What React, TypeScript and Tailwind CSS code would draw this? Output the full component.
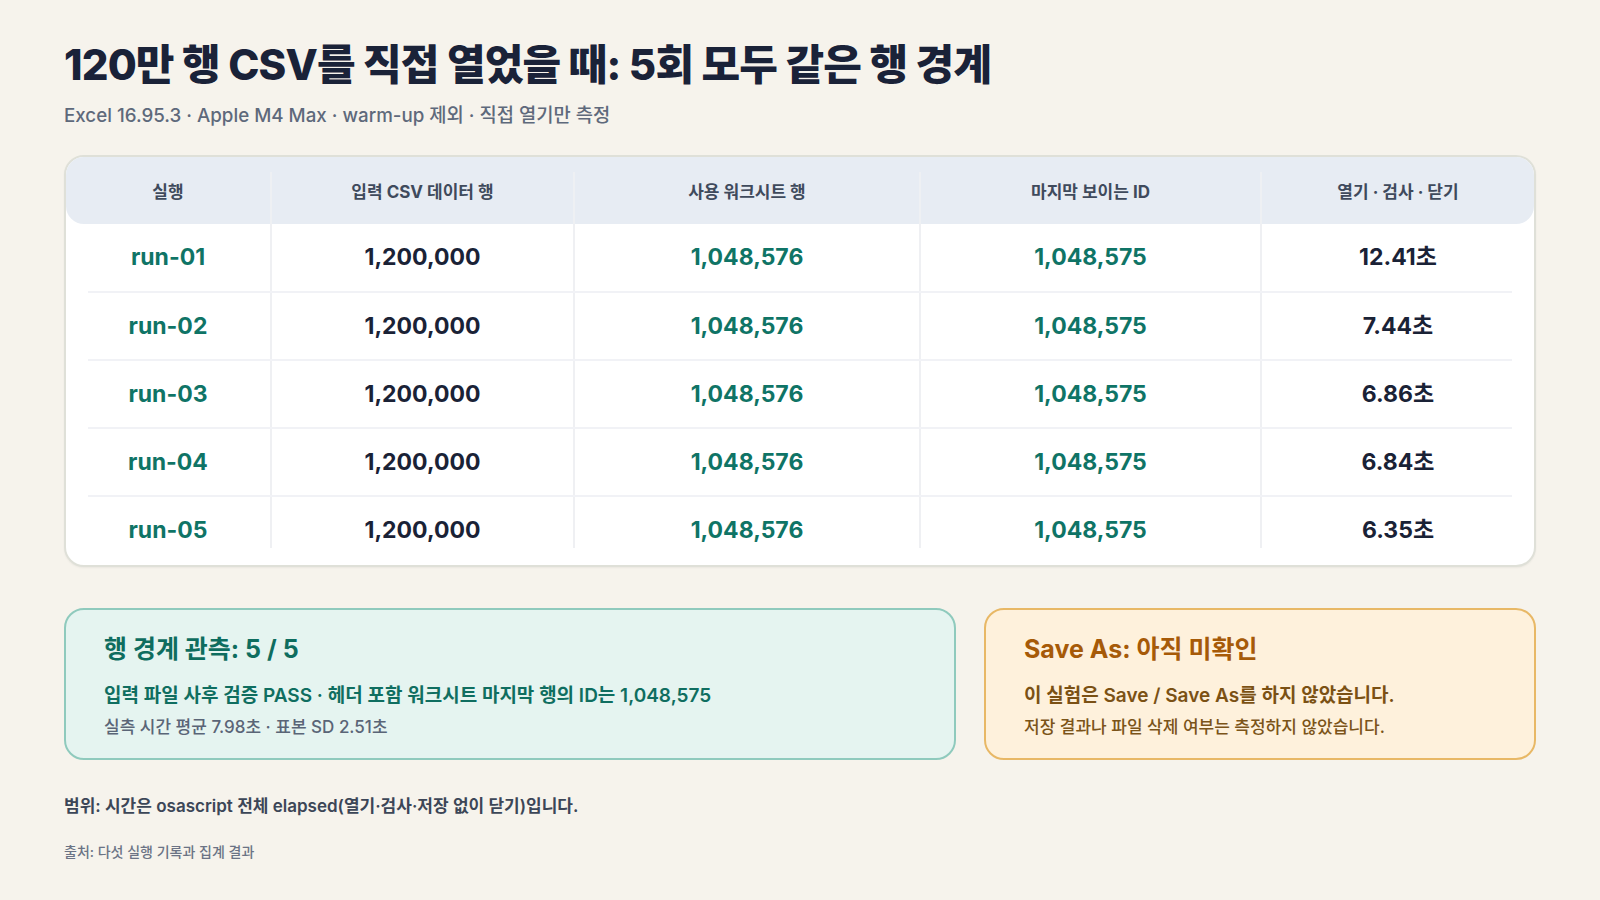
import * as React from 'react';

type Run = {
  id: string;
  input: string;
  used: string;
  lastId: string;
  time: string;
};

const runs: Run[] = [
  { id: 'run-01', input: '1,200,000', used: '1,048,576', lastId: '1,048,575', time: '12.41초' },
  { id: 'run-02', input: '1,200,000', used: '1,048,576', lastId: '1,048,575', time: '7.44초' },
  { id: 'run-03', input: '1,200,000', used: '1,048,576', lastId: '1,048,575', time: '6.86초' },
  { id: 'run-04', input: '1,200,000', used: '1,048,576', lastId: '1,048,575', time: '6.84초' },
  { id: 'run-05', input: '1,200,000', used: '1,048,576', lastId: '1,048,575', time: '6.35초' },
];

const headers = ['실행', '입력 CSV 데이터 행', '사용 워크시트 행', '마지막 보이는 ID', '열기 · 검사 · 닫기'];

// column widths measured off the card, inside its 2px border
const gridCols = 'grid grid-cols-[204px_303px_346px_341px_274px]';

const rowHeights = ['h-[67px]', 'h-[66px]', 'h-[66px]', 'h-[66px]', 'h-[68px]'];

const HeaderRow: React.FC = () => (
  <div className={`${gridCols} h-[67px] rounded-[18px] bg-[#e7ecf3]`}>
    {headers.map((h, i) => (
      <div key={h} className="flex flex-col">
        <div
          className={`mt-[15px] flex h-[52px] items-center justify-center pb-[10px] text-[17px] font-bold text-[#3f4a5c] ${
            i > 0 ? 'border-l-2 border-[#eef0f3]' : ''
          }`}
        >
          {h}
        </div>
      </div>
    ))}
  </div>
);

const BodyRow: React.FC<{ run: Run; index: number; last: boolean }> = ({ run, index, last }) => {
  const cells = [
    { text: run.id, color: 'text-[#0f7466]' },
    { text: run.input, color: 'text-[#1a2236]' },
    { text: run.used, color: 'text-[#0f7466]' },
    { text: run.lastId, color: 'text-[#0f7466]' },
    { text: run.time, color: 'text-[#1a2236]' },
  ];
  return (
    <div className={`${gridCols} ${rowHeights[index]}`}>
      {cells.map((c, i) => {
        const line = i > 0 ? 'border-l-2 border-[#eff0f3]' : '';
        return (
          <div key={i} className="flex flex-col">
            {last ? (
              <div
                className={`flex h-[51px] items-center justify-center pt-[16px] text-[23px] font-bold ${c.color} ${line}`}
              >
                {c.text}
              </div>
            ) : (
              <div className={`flex h-full items-center justify-center text-[23px] font-bold ${c.color} ${line}`}>
                {c.text}
              </div>
            )}
          </div>
        );
      })}
    </div>
  );
};

export default function App() {
  return (
    <div className="min-h-screen w-full bg-[#f6f3ec] px-[64px] pt-[37px] [font-family:Inter,'Noto_Sans_CJK_KR',sans-serif]">
      <h1 className="text-[42px] leading-[56px] font-extrabold tracking-[-0.02em] text-[#1a2238]">
        120만 행 CSV를 직접 열었을 때: 5회 모두 같은 행 경계
      </h1>
      <p className="mt-[10px] text-[18.75px] leading-[26px] font-medium text-[#5e697b]">
        Excel 16.95.3 · Apple M4 Max · warm-up 제외 · 직접 열기만 측정
      </p>

      <div className="mt-[26px] w-[1472px] rounded-[20px] border-2 border-[#dfe0d8] bg-white shadow-[0_1px_2px_rgba(0,0,0,0.05)]">
        <HeaderRow />
        {runs.map((r, i) => (
          <React.Fragment key={r.id}>
            {i > 0 && <div className="mx-[22px] h-[2px] bg-[#f1f2f6]" />}
            <BodyRow run={r} index={i} last={i === runs.length - 1} />
          </React.Fragment>
        ))}
      </div>

      <div className="mt-[41px] grid w-[1472px] grid-cols-[892px_1fr] gap-[28px]">
        <div className="h-[152px] rounded-[20px] border-2 border-[#8fcabd] bg-[#e5f4f0] pt-[23px] pl-[38px]">
          <div className="text-[25px] leading-[32px] font-bold text-[#0e6d5f]">행 경계 관측: 5 / 5</div>
          <div className="mt-[17px] text-[19px] leading-[27px] font-semibold text-[#0f6e60]">
            입력 파일 사후 검증 PASS · 헤더 포함 워크시트 마지막 행의 ID는 1,048,575
          </div>
          <div className="mt-[6px] text-[17px] leading-[24px] font-medium text-[#5a6577]">
            실측 시간 평균 7.98초 · 표본 SD 2.51초
          </div>
        </div>
        <div className="h-[152px] rounded-[20px] border-2 border-[#e8b866] bg-[#fef1dc] pt-[23px] pl-[38px]">
          <div className="text-[25px] leading-[32px] font-bold text-[#a65a08]">Save As: 아직 미확인</div>
          <div className="mt-[17px] text-[19px] leading-[27px] font-semibold text-[#7b5114]">
            이 실험은 Save / Save As를 하지 않았습니다.
          </div>
          <div className="mt-[6px] text-[17px] leading-[24px] font-medium text-[#7b5419]">
            저장 결과나 파일 삭제 여부는 측정하지 않았습니다.
          </div>
        </div>
      </div>

      <p className="mt-[34px] text-[17px] leading-[24px] font-semibold text-[#3c4657]">
        범위: 시간은 osascript 전체 elapsed(열기·검사·저장 없이 닫기)입니다.
      </p>
      <p className="mt-[24px] text-[14px] leading-[20px] font-medium text-[#6b7385]">
        출처: 다섯 실행 기록과 집계 결과
      </p>
    </div>
  );
}
